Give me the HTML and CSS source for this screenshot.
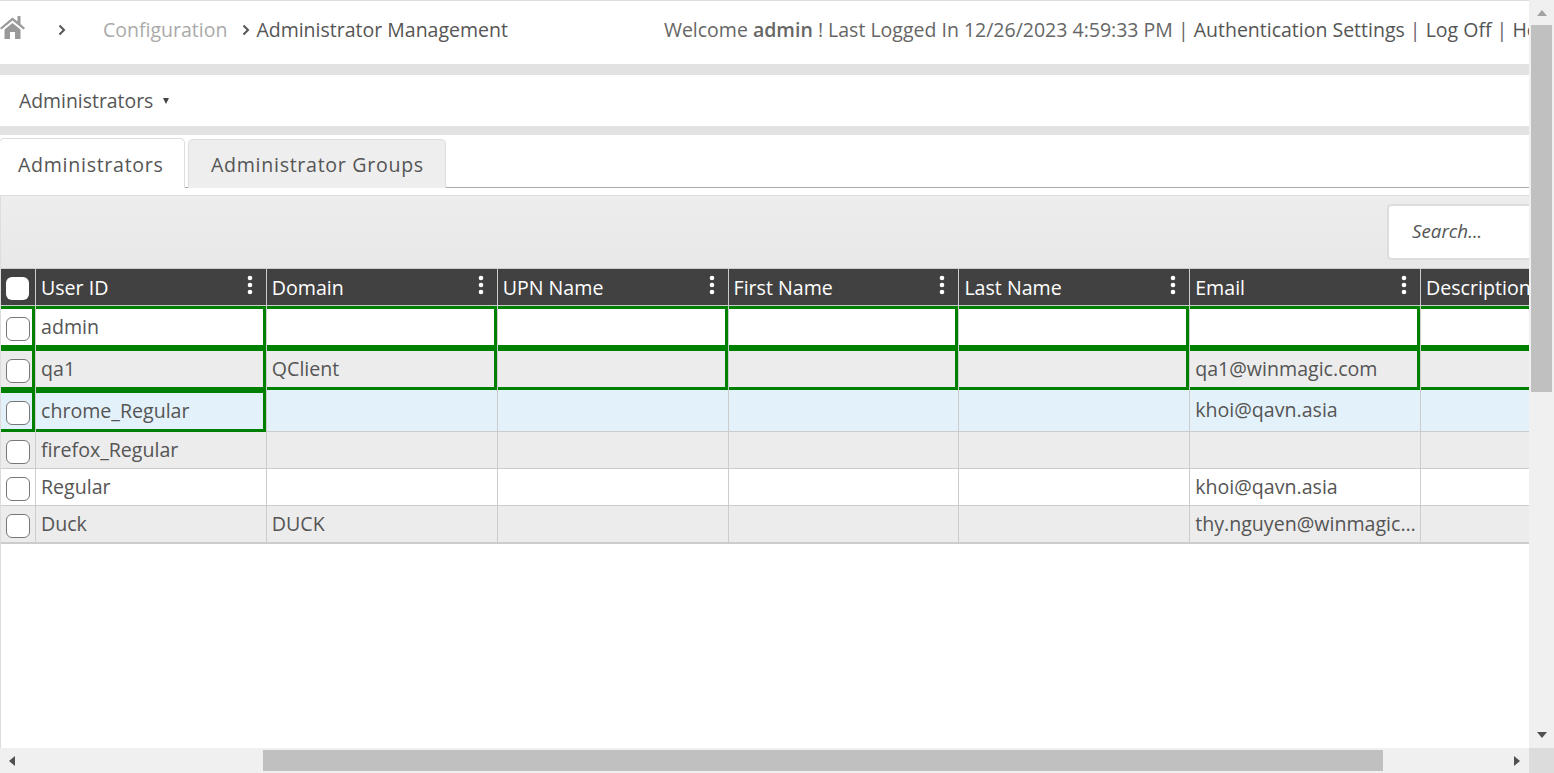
FILE: index.html
```html
<!DOCTYPE html>
<html lang="en">
<head>
  <meta charset="UTF-8">
  <title>Administrator Management</title>
  <link rel="stylesheet" href="styles.css">
</head>
<body>
  <div class="window">
    <div class="page">
      <header class="topbar">
        <svg class="home" viewBox="0 0 25 23"><path d="M0 12L12.500 1.500 17.500 5.500V0H20.500V8L25 12 23.500 13.500 12.500 4.500 1.500 13.500Z"/><path d="M4.500 13.500L12.500 7 20.500 13.500V23H15V16H10V23H4.500Z"/></svg>
        <svg class="chev first" viewBox="0 0 8 12"><polyline points="1.500,1.500 6,6 1.500,10.500"/></svg>
        <span class="crumb">Configuration</span>
        <svg class="chev" viewBox="0 0 8 12"><polyline points="1.500,1.500 6,6 1.500,10.500"/></svg>
        <span class="crumb-current">Administrator Management</span>
        <div class="userinfo">Welcome <b>admin</b> ! Last Logged In 12/26/2023 4:59:33 PM <span class="sep">|</span> <a>Authentication Settings</a> <span class="sep">|</span> <a>Log Off</a> <span class="sep">|</span> <a>Help</a></div>
      </header>

      <nav class="subnav">
        <span>Administrators</span>
        <i class="caret"></i>
      </nav>

      <div class="tabs">
        <div class="tab active">Administrators</div>
        <div class="tab">Administrator Groups</div>
      </div>

      <section class="panel">
        <div class="toolbar">
          <input class="search" type="text" placeholder="Search...">
        </div>
        <table class="grid">
          <thead>
            <tr>
              <th class="col-check"><span class="check filled"></span></th>
              <th><div class="th-in">User ID <svg class="kebab" viewBox="0 0 6 20"><circle cx="3" cy="3" r="2.300"/><circle cx="3" cy="10" r="2.300"/><circle cx="3" cy="17" r="2.300"/></svg></div></th>
              <th><div class="th-in">Domain <svg class="kebab" viewBox="0 0 6 20"><circle cx="3" cy="3" r="2.300"/><circle cx="3" cy="10" r="2.300"/><circle cx="3" cy="17" r="2.300"/></svg></div></th>
              <th><div class="th-in">UPN Name <svg class="kebab" viewBox="0 0 6 20"><circle cx="3" cy="3" r="2.300"/><circle cx="3" cy="10" r="2.300"/><circle cx="3" cy="17" r="2.300"/></svg></div></th>
              <th><div class="th-in">First Name <svg class="kebab" viewBox="0 0 6 20"><circle cx="3" cy="3" r="2.300"/><circle cx="3" cy="10" r="2.300"/><circle cx="3" cy="17" r="2.300"/></svg></div></th>
              <th><div class="th-in">Last Name <svg class="kebab" viewBox="0 0 6 20"><circle cx="3" cy="3" r="2.300"/><circle cx="3" cy="10" r="2.300"/><circle cx="3" cy="17" r="2.300"/></svg></div></th>
              <th><div class="th-in">Email <svg class="kebab" viewBox="0 0 6 20"><circle cx="3" cy="3" r="2.300"/><circle cx="3" cy="10" r="2.300"/><circle cx="3" cy="17" r="2.300"/></svg></div></th>
              <th><div class="th-in">Description</div></th>
            </tr>
          </thead>
          <tbody>
            <tr class="tall">
              <td class="flag"><span class="check"></span></td>
              <td class="flag">admin</td>
              <td class="flag"></td>
              <td class="flag"></td>
              <td class="flag"></td>
              <td class="flag"></td>
              <td class="flag"></td>
              <td class="flag"></td>
            </tr>
            <tr class="tall alt">
              <td class="flag"><span class="check"></span></td>
              <td class="flag">qa1</td>
              <td class="flag">QClient</td>
              <td class="flag"></td>
              <td class="flag"></td>
              <td class="flag"></td>
              <td class="flag">qa1@winmagic.com</td>
              <td class="flag"></td>
            </tr>
            <tr class="tall hover">
              <td class="flag"><span class="check"></span></td>
              <td class="flag">chrome_Regular</td>
              <td></td>
              <td></td>
              <td></td>
              <td></td>
              <td>khoi@qavn.asia</td>
              <td></td>
            </tr>
            <tr class="alt">
              <td><span class="check"></span></td>
              <td>firefox_Regular</td>
              <td></td>
              <td></td>
              <td></td>
              <td></td>
              <td></td>
              <td></td>
            </tr>
            <tr>
              <td><span class="check"></span></td>
              <td>Regular</td>
              <td></td>
              <td></td>
              <td></td>
              <td></td>
              <td>khoi@qavn.asia</td>
              <td></td>
            </tr>
            <tr class="alt">
              <td><span class="check"></span></td>
              <td>Duck</td>
              <td>DUCK</td>
              <td></td>
              <td></td>
              <td></td>
              <td>thy.nguyen@winmagic.com</td>
              <td></td>
            </tr>
          </tbody>
        </table>
      </section>
    </div>

    <div class="vbar">
      <i class="arrow up"></i>
      <div class="vthumb"></div>
      <i class="arrow down"></i>
    </div>
    <div class="hbar">
      <i class="arrow left"></i>
      <div class="hthumb"></div>
      <i class="arrow right"></i>
    </div>
    <div class="corner"></div>
  </div>
</body>
</html>
```

FILE: styles.css
```css
* {
  box-sizing: border-box;
}
html, body {
  margin: 0;
  padding: 0;
  height: 100%;
  overflow: hidden;
}
body {
  font-family: "Open Sans", sans-serif;
  font-size: 19.6px;
  color: #555;
  background-color: #fff;
}

.window {
  display: grid;
  grid-template-columns: 1529px 25px;
  grid-template-rows: 748px 25px;
  height: 773px;
}
.page {
  overflow: hidden;
  display: flex;
  flex-direction: column;
  border-top: 1px solid #ddd;
}

/* top bar */
.topbar {
  display: flex;
  align-items: center;
  flex-shrink: 0;
  height: 63px;
  font-size: 19.5px;
  white-space: nowrap;
  background-color: #fff;
  padding-bottom: 6px;
}
.home {
  width: 25px;
  height: 23px;
  margin-top: -5px;
  fill: #999;
  flex-shrink: 0;
}
.chev {
  width: 8px;
  height: 12px;
  margin-left: 15px;
  margin-right: 6px;
  flex-shrink: 0;
}
.chev.first {
  margin-left: 33px;
  margin-right: 37px;
}
.chev polyline {
  fill: none;
  stroke: #555;
  stroke-width: 2;
}
.crumb {
  color: #aaa;
}
.crumb-current {
  color: #555;
}
.userinfo {
  margin-left: 156px;
  flex-shrink: 0;
  color: #666;
}
.userinfo b {
  font-weight: 600;
}
.userinfo a {
  color: #555;
}

/* sub navigation */
.subnav {
  display: flex;
  align-items: center;
  flex-shrink: 0;
  height: 62px;
  padding: 0 0 0 19px;
  font-size: 19.4px;
  background-color: #fff;
  border-top: 11px solid #e2e2e2;
}
.caret {
  width: 0;
  height: 0;
  margin-left: 10px;
  border-left: 3.500px solid transparent;
  border-right: 3.500px solid transparent;
  border-top: 6px solid #444;
}

/* tabs */
.tabs {
  display: flex;
  align-items: flex-end;
  flex-shrink: 0;
  height: 62px;
  border-top: 9px solid #e2e2e2;
  border-bottom: 1px solid #aaa;
  letter-spacing: 0.7px;
}
.tab {
  display: flex;
  align-items: center;
  height: 49px;
  margin-bottom: -1px;
  padding: 0 21px 0 22px;
  margin-left: 3px;
  background-color: #eee;
  border: 1px solid #ddd;
  border-bottom: 0;
  border-radius: 5px 5px 0 0;
  color: #555;
}
.tab.active {
  width: 186px;
  height: 50px;
  margin-left: -1px;
  padding: 2px 0 0 18px;
  background-color: #fff;
}

/* grid panel */
.panel {
  flex: 1;
  margin-top: 7px;
  border-top: 1px solid #ddd;
  border-left: 1px solid #ddd;
  overflow: hidden;
}
.toolbar {
  display: flex;
  justify-content: flex-end;
  align-items: center;
  height: 73px;
  background: linear-gradient(#eeeded, #e9e8e8);
  border-bottom: 1px solid #ccc;
}
.search {
  width: 142px;
  height: 56px;
  padding: 0 0 2px 23px;
  border: 2px solid #ddd;
  border-right: 0;
  border-radius: 4px 0 0 4px;
  background-color: #fff;
  font-family: "Open Sans", sans-serif;
  font-size: 18.8px;
  font-style: italic;
  outline: none;
}
.search::placeholder {
  color: #555;
  opacity: 1;
}

.grid {
  table-layout: fixed;
  width: 1651px;
  border-collapse: separate;
  border-spacing: 0;
}
.col-check {
  width: 35px;
}
.grid th {
  height: 37px;
  padding: 0 5px;
  background-color: #414141;
  color: #fff;
  font-weight: 400;
  text-align: left;
  border-right: 1px solid #ccc;
  border-bottom: 1px solid #ccc;
  white-space: nowrap;
}
.th-in {
  display: flex;
  align-items: center;
  justify-content: space-between;
  padding-right: 8px;
}
.kebab {
  width: 6px;
  height: 20px;
  margin-top: -4px;
  fill: #fff;
  flex-shrink: 0;
}
.grid td {
  height: 37px;
  padding: 0 0 2px 5px;
  border-right: 1px solid #ccc;
  border-bottom: 1px solid #ccc;
  white-space: nowrap;
  overflow: hidden;
  text-overflow: ellipsis;
}
.grid tr.tall td {
  height: 42px;
}
.grid tr.alt td {
  background-color: #ececec;
}
.grid tr.hover td {
  background-color: #e3f2fa;
}
.grid td.flag {
  border-bottom: 0;
  box-shadow: inset 0 3px 0 #008000, inset -3px 0 0 #008000, inset 0 -3px 0 #008000;
}
.grid tbody tr:last-child td {
  height: 38px;
  padding-bottom: 2px;
  border-bottom-width: 2px;
}
.check {
  display: block;
  width: 24px;
  height: 24px;
  margin-top: 6px;
  background-color: #fff;
  border: 1.500px solid #777;
  border-radius: 6px;
}
.check.filled {
  margin-top: 2px;
  width: 23px;
  height: 23px;
  border: 0;
}

/* scrollbars */
.vbar {
  display: flex;
  flex-direction: column;
  align-items: center;
  background-color: #f0f0f0;
}
.vthumb {
  width: 21px;
  height: 367px;
  background-color: #c0c0c0;
}
.hbar {
  display: flex;
  align-items: center;
  background-color: #f0f0f0;
}
.hthumb {
  width: 1120px;
  height: 21px;
  margin-left: 240px;
  background-color: #c0c0c0;
}
.corner {
  background-color: #dcdcdc;
}
.arrow {
  display: block;
  width: 0;
  height: 0;
  flex-shrink: 0;
}
.arrow.up {
  margin: 10px 0 9px;
  border-left: 5.500px solid transparent;
  border-right: 5.500px solid transparent;
  border-bottom: 6px solid #a3a3a3;
}
.arrow.down {
  margin-top: auto;
  margin-bottom: 10px;
  border-left: 5.500px solid transparent;
  border-right: 5.500px solid transparent;
  border-top: 6px solid #505050;
}
.arrow.left {
  margin: 0 8px 0 9px;
  border-top: 5.500px solid transparent;
  border-bottom: 5.500px solid transparent;
  border-right: 6px solid #505050;
}
.arrow.right {
  margin-left: 131px;
  border-top: 5.500px solid transparent;
  border-bottom: 5.500px solid transparent;
  border-left: 6px solid #505050;
}
```
